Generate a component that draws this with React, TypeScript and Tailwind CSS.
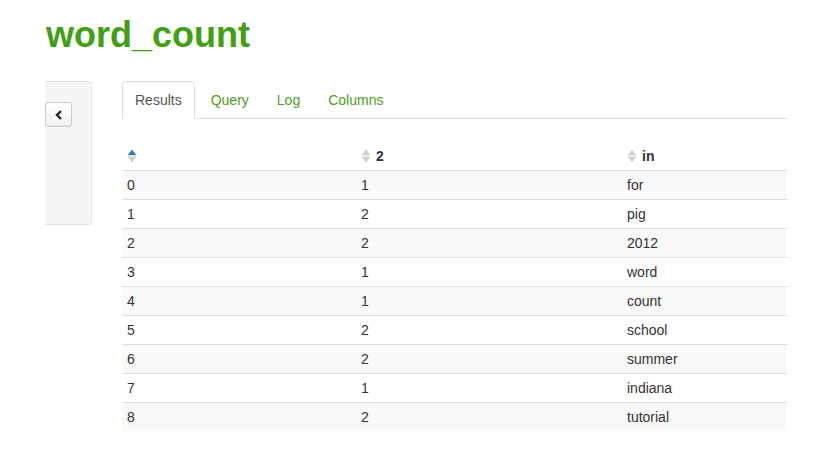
const rows: [number, number, string][] = [
  [0, 1, "for"],
  [1, 2, "pig"],
  [2, 2, "2012"],
  [3, 1, "word"],
  [4, 1, "count"],
  [5, 2, "school"],
  [6, 2, "summer"],
  [7, 1, "indiana"],
  [8, 2, "tutorial"],
];

function SortIcon({ active }: { active?: boolean }) {
  return (
    <svg width="10" height="14" viewBox="0 0 10 14" className="shrink-0">
      <path d="M5 0.5 L9.5 6.2 L0.5 6.2 Z" fill={active ? "#3a7fb4" : "#d0d0d0"} />
      <path d="M0.5 7.6 L9.5 7.6 L5 13.5 Z" fill="#d0d0d0" />
    </svg>
  );
}

function Tabs() {
  const tabs = ["Results", "Query", "Log", "Columns"];
  return (
    <ul className="flex border-b border-[#ddd] h-[38px]">
      {tabs.map((t, i) =>
        i === 0 ? (
          <li
            key={t}
            className="mr-[2px] -mb-px border border-[#ddd] border-b-white bg-white rounded-t-[4px] px-[12px] py-[8px] leading-[20px] text-[#555]"
          >
            {t}
          </li>
        ) : (
          <li
            key={t}
            className={
              "mr-[2px] border border-transparent px-[12px] py-[8px] leading-[20px] text-[#4b9f1a]" +
              (i === 1 ? " ml-px" : "")
            }
          >
            {t}
          </li>
        )
      )}
    </ul>
  );
}

function ResultTable() {
  return (
    <table className="mt-[22px] w-[665px] border-collapse text-[14px] text-[#333] table-fixed">
      <colgroup>
        <col className="w-[234px]" />
        <col className="w-[266px]" />
        <col className="w-[165px]" />
      </colgroup>
      <thead>
        <tr className="h-[29px]">
          <th className="px-[5px] pt-[2px] text-left font-bold">
            <div className="flex items-center gap-[5px]">
              <SortIcon active />
            </div>
          </th>
          <th className="px-[5px] pt-[2px] text-left font-bold">
            <div className="flex items-center gap-[5px]">
              <SortIcon />
              <span>2</span>
            </div>
          </th>
          <th className="px-[5px] pt-[2px] text-left font-bold">
            <div className="flex items-center gap-[5px]">
              <SortIcon />
              <span>in</span>
            </div>
          </th>
        </tr>
      </thead>
      <tbody>
        {rows.map(([a, b, c], i) => (
          <tr key={a} className={i % 2 === 0 ? "bg-[#f9f9f9]" : "bg-white"}>
            <td className="border-t border-[#ddd] px-[5px] py-[4px] leading-[20px]">{a}</td>
            <td className="border-t border-[#ddd] px-[5px] py-[4px] leading-[20px]">{b}</td>
            <td className="border-t border-[#ddd] px-[5px] py-[4px] leading-[20px]">{c}</td>
          </tr>
        ))}
      </tbody>
    </table>
  );
}

export default function App() {
  return (
    <div className="min-h-[460px] w-[819px] bg-white font-['Liberation_Sans',Arial,sans-serif] text-[14px]">
      <h1 className="pl-[46px] pt-[15px] text-[36px] font-bold leading-[40px] text-[#40a012]">
        word_count
      </h1>
      <div className="mt-[26px] flex">
        <div className="ml-[45px] h-[144px] w-[47px] rounded-r-[4px] border border-l-0 border-[#e3e3e3] bg-[#f5f5f5] pt-[20px]">
          <button className="flex h-[25px] w-[27px] items-center justify-center rounded-[3px] border border-[#ccc] bg-gradient-to-b from-white to-[#f0f0f0] shadow-[inset_0_-1px_0_rgba(0,0,0,0.05)]">
            <svg width="8" height="10" viewBox="0 0 8 10">
              <path d="M6 1 L2 5 L6 9" fill="none" stroke="#222" strokeWidth="2.4" />
            </svg>
          </button>
        </div>
        <div className="ml-[30px]">
          <Tabs />
          <ResultTable />
        </div>
      </div>
    </div>
  );
}
